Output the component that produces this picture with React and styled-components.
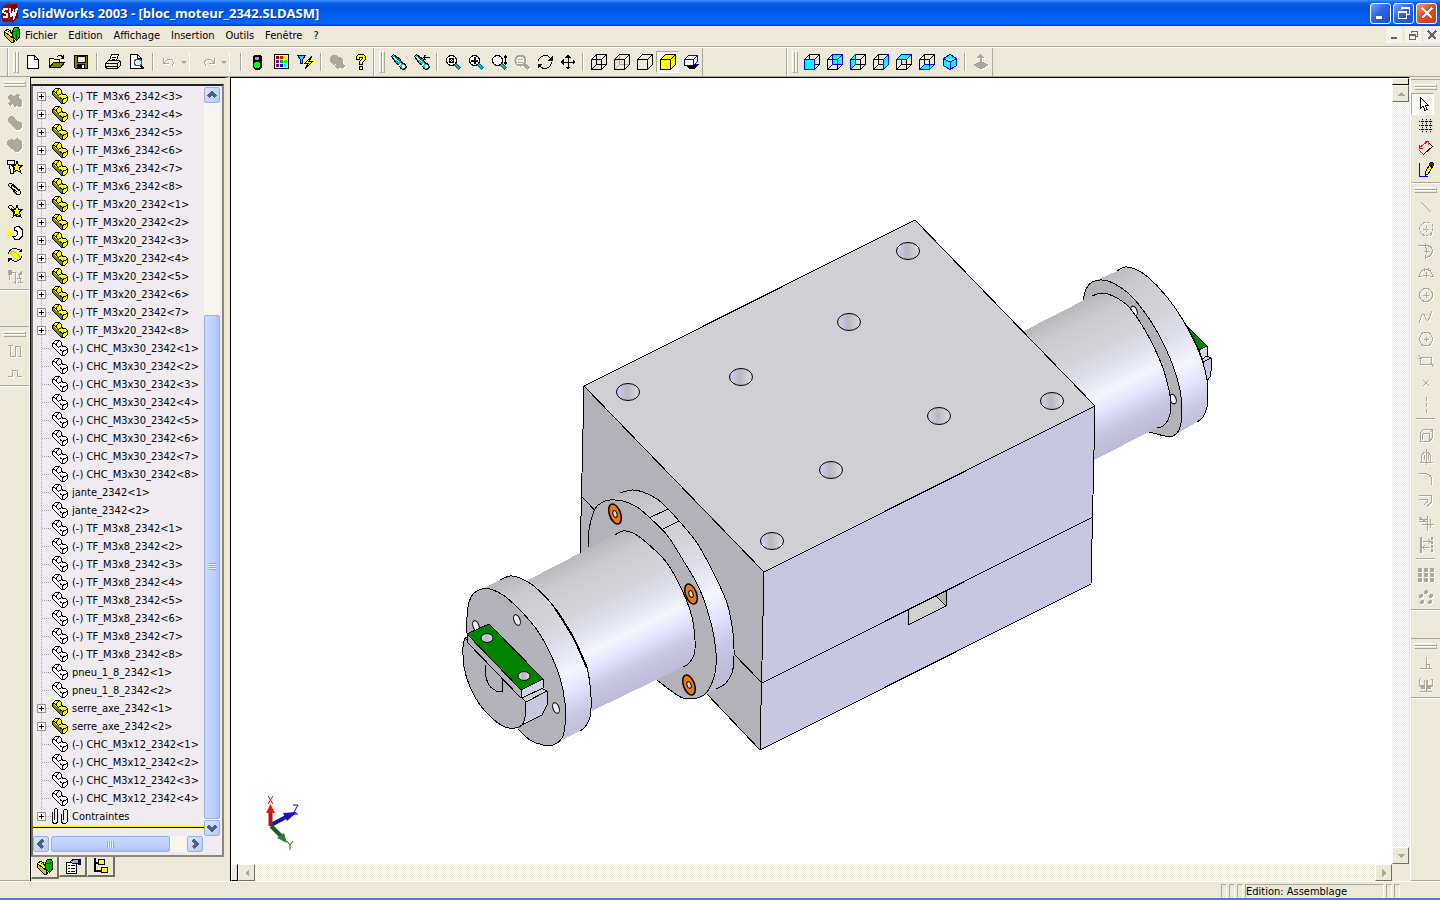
import React from 'react';
import styled, { createGlobalStyle } from 'styled-components';

const GlobalStyle = createGlobalStyle`
  * {
    box-sizing: border-box;
  }

  body {
    margin: 0;
    background: #ece9d8;
    font-family: "DejaVu Sans Condensed", "Noto Sans", sans-serif;
    font-size: 11px;
    color: #000;
  }

  button {
    padding: 0;
    border: none;
    background: none;
    font: inherit;
    color: inherit;
  }

  ul {
    margin: 0;
    padding: 0;
    list-style: none;
  }
`;

/* ---------- icons ---------- */

const part = (light, dark) => (
  <>
    <path d="M.5 3.5L3.5 .5H7.5L9.5 2.5V5.5L11.5 6.5H13.5L15.5 8.5V12.5L12.5 15.5H9.5L.5 6.5Z" fill={light} stroke="#000" />
    <path d="M1 3.5L4.5 6.5L10.5 11.5V15H9.5L1 6.5Z" fill={dark} />
    <path d="M.5 3.5H2.5L4.5 5.5V3.5L7.5 .5M4.5 5.5L6.5 7.5L9.5 5.5M8 9.5L10.5 11.5L15 9.5M10.5 11.5V15" fill="none" stroke="#000" />
  </>
);

const assembly = (
  <>
    <path d="M.5 4.500L4 2L12 11L10 15H7L.5 8Z" fill="#ff0" stroke="#000" />
    <path d="M1 5L9.500 11.500V15H7L1 8Z" fill="#cc0" />
    <path d="M1 5L9.500 11.500V15M4 4.500L7 3" fill="none" stroke="#000" />
    <path d="M8.500 3.500L10.500 .5H14.500L15.500 3V10L12.500 13.500L8.500 10Z" fill="#00c000" stroke="#000" />
    <path d="M8.500 4.500H12.500V13M12.500 4.500L15.500 3" fill="none" stroke="#060" />
  </>
);

const frame = 'M.5 5.5H10.5V15.5H.5ZM5.5 .5H15.5V10.5H5.5ZM.5 5.5L5.5 .5M10.5 5.5L15.5 .5M.5 15.5L5.5 10.5M10.5 15.5L15.5 10.5';
const outline = 'M.5 5.5L5.5 .5H15.5V10.5L10.5 15.5H.5ZM.5 5.5H10.5V15.5M10.5 5.5L15.5 .5';

const view = (face, over) => (
  <>
    <path d={frame} fill="none" stroke="#000" />
    <path d={face} fill="#0ff" stroke="#00f" />
    {over && <path d={over} fill="none" stroke="#000" />}
  </>
);

const lens = (inner) => (
  <>
    <path d="M10 10L15 15" stroke="#088" strokeWidth="3" />
    <path d="M10 10L14 14" stroke="#3cf" />
    <circle cx="6.5" cy="6.5" r="5" fill="#fff" stroke="#000" />
    {inner}
  </>
);

const torchBody = (
  <>
    <path d="M.5 2.5L2.5 .5L9.500 5.5L10.500 8.500L14.5 10.5L15.5 13L13 15.5L9.5 14.5L8.500 11L5.5 9.5Z" fill="#0cc" stroke="#000" />
    <path d="M2.5 3L8 8M10 9.500L8 11.500" stroke="#fff" />
    <path d="M4.500 3L10 8" stroke="#066" />
    <circle cx="12.5" cy="12.5" r="1.500" fill="#fff" />
  </>
);

const star = 'M10 2L11.500 6H16L12.500 9L14 14L10 11L6 14L7.500 9L4 6H8.500Z';

const icons = {
  assembly,
  part: part('#ff0', '#808000'),
  partLight: part('#fff', '#fff'),
  mates: (
    <path d="M.5 4V12.5Q.5 15.500 3 15.500Q5.500 15.500 5.500 12.500V3Q5.500 .5 4 .5Q2.500 .5 2.500 3V12M9.500 6V12.500Q9.500 15.500 12 15.500Q15.500 15.500 15.500 12.500V4Q15.500 1.500 13.500 1.500Q11.500 1.500 11.500 4V12" fill="none" stroke="#000" />
  ),
  fresh: <path d="M2.5 1.5H9.5L13.5 5.5V14.5H2.5ZM9.5 1.5V5.5H13.5" fill="#fff" stroke="#000" />,
  open: (
    <>
      <path d="M.5 13.5V4.5H4.5L5.5 5.5H10.5V8" fill="#ff9" stroke="#000" />
      <path d="M.5 13.5L4.5 8.5H15.5L11.5 13.5Z" fill="#808000" stroke="#000" />
      <path d="M8.5 2.5L10 1.5H12L14.5 4M14.5 1V4.5H11.5" fill="none" stroke="#000" />
    </>
  ),
  save: (
    <>
      <path d="M1.5 1.5H14.5V14.5H2.5L1.5 13.5Z" fill="#808000" stroke="#000" />
      <path d="M4 2H12V8H4Z" fill="#ece9d8" stroke="#000" />
      <path d="M4 10H12V15H4Z" fill="#000" />
      <path d="M9 11H11V14H9Z" fill="#fff" />
    </>
  ),
  print: (
    <>
      <path d="M4.5 6.5L6.5 .5H13.5L11.5 6.5" fill="#fff" stroke="#000" />
      <path d="M7 3.5H11M6.5 5.5H10" stroke="#000" />
      <path d="M.5 9.5L3.5 6.5H14.5L15.5 7.5V11.5L12.5 14.5H1.5L.5 12.5Z" fill="#ece9d8" stroke="#000" />
      <path d="M.5 9.5H12.5V14M12.5 9.5L15.5 7M1 12.5H12" fill="none" stroke="#000" />
      <path d="M8 11H10V12H8Z" fill="#ff0" />
    </>
  ),
  preview: (
    <>
      <path d="M1.5 .5H8.5L12.5 4.5V14.5H1.5ZM8.5 .5V4.5H12.5" fill="#fff" stroke="#000" />
      <path d="M11 11L15 15" stroke="#000" strokeWidth="2" />
      <circle cx="9" cy="8.5" r="3.5" fill="#cff" stroke="#555" />
    </>
  ),
  undo: <path d="M2.5 4V9.5H8M2.5 9.5L6 6Q9 4.500 11.500 6.500Q13.500 9.500 10.500 12.500" fill="none" stroke="currentColor" />,
  redo: <path d="M13.5 4V9.5H8M13.5 9.5L10 6Q7 4.500 4.500 6.500Q2.500 9.500 5.500 12.500" fill="none" stroke="currentColor" />,
  light: (
    <>
      <path d="M5.5 .5H10.5L12.5 2.5V13.5L10.5 15.5H5.5L3.5 13.5V2.5Z" fill="#000" />
      <circle cx="8" cy="4.5" r="2" fill="#a99" />
      <circle cx="8" cy="11" r="3" fill="#0f0" />
    </>
  ),
  palette: (
    <>
      <path d="M1.500 .5H15.500V14.500H1.500Z" fill="#fff" stroke="#000" />
      {['#800000', '#f00', '#ff0', '#808', '#0a0', '#0f0', '#808', '#00f', '#0ff'].map((c, i) => (
        <rect key={c + i} x={3 + (i % 3) * 4} y={2 + Math.floor(i / 3) * 4} width="3" height="3" fill={c} />
      ))}
    </>
  ),
  filter: (
    <>
      <path d="M.5 1.5H8.5L5.5 5.5V9.5H3.5V5.5Z" fill="#3cf" stroke="#008" />
      <path d="M14.5 2.5L8 9H11.5L8 14.5L15.5 7.5H12Z" fill="#ff0" stroke="#000" />
    </>
  ),
  blob: <path d="M1 3L3 1H7L9 3L12 3L14 6V9L16 12L14 15L11 14L9 15L6 13L7 10L4 11L1 8Z" fill="currentColor" />,
  help: (
    <path d="M3.5 5.5V2.5L5.500 .5H10.5L12.5 2.5V5.5L9.5 8.5V10.500H6.500V7.5L9.500 4.500V3.500H6.500V5.5ZM6.5 12.5H9.5V15.5H6.5Z" fill="#ff0" stroke="#000" />
  ),
  torch: torchBody,
  torchBack: (
    <>
      {torchBody}
      <path d="M9 3.5H16M11.5 1L9.5 3.5L11.5 6" fill="none" stroke="#000" />
    </>
  ),
  zoomFit: lens(<path d="M4.5 4.5H8.5V8.5H4.5ZM4.5 4.5L8.5 8.5M8.5 4.5L4.5 8.5" fill="none" stroke="#000" />),
  zoomIn: lens(<path d="M3 6.5H10M6.5 3V10" stroke="#000" strokeWidth="2" />),
  zoomDrag: lens(<path d="M14.5 2V10M13 3.5L14.5 1.5L16 3.5M13 8.5L14.5 10.5L16 8.5" fill="none" stroke="#000" />),
  zoomOff: (
    <>
      <path d="M10 10L15 15" stroke="currentColor" strokeWidth="3" />
      <circle cx="6.5" cy="6.5" r="5" fill="none" stroke="currentColor" strokeWidth="2" />
      <path d="M4 5.5H9M4 8.5H9" stroke="currentColor" />
    </>
  ),
  rotate: (
    <>
      <path d="M1.5 7.5Q2 2 8 1.5Q12 1.5 14 5M14.5 8.5Q14 14 8 14.5Q4 14.5 2 11" fill="none" stroke="#000" />
      <path d="M15.5 1.5V6.5H10.5ZM.5 14.5V9.5H5.5Z" fill="#000" />
    </>
  ),
  pan: (
    <>
      <path d="M8 1V15M1 8H15" stroke="#000" />
      <path d="M8 0L11 3.5H5ZM8 16L11 12.5H5ZM0 8L3.5 5V11ZM16 8L12.5 5V11Z" fill="#000" />
    </>
  ),
  wire: <path d={frame} fill="none" stroke="#000" />,
  hidden: (
    <>
      <path d="M5.5 .5V10.5H15.5M5.5 10.5L.5 15.5" fill="none" stroke="#aaa" />
      <path d={outline} fill="none" stroke="#000" />
    </>
  ),
  noHidden: <path d={outline} fill="none" stroke="#000" />,
  shaded: <path d={outline} fill="#ff0" stroke="#000" />,
  shadow: (
    <>
      <path d="M4 12H10L13 10H16L11 15H6Z" fill="#000" />
      <path d="M1.5 5.5L5.5 1.5H14.5V7.5L10.5 11.5H1.5ZM1.5 5.5H10.5V11.5M10.5 5.5L14.5 1.5" fill="#fff" stroke="#00f" />
    </>
  ),
  viewFront: view('M.5 5.5H10.5V15.5H.5Z'),
  viewBack: view('M5.5 .5H15.5V10.5H5.5Z', 'M.5 5.5H10.5V15.5H.5ZM10.5 5.5L15.5 .5'),
  viewLeft: view('M.5 5.5L5.5 .5V10.5L.5 15.5Z', 'M.5 5.5H10.5'),
  viewRight: view('M10.5 5.5L15.5 .5V10.5L10.5 15.5Z'),
  viewTop: view('M.5 5.5L5.5 .5H15.5L10.5 5.5Z'),
  viewBottom: view('M.5 15.5L5.5 10.5H15.5L10.5 15.5Z', 'M10.5 5V15'),
  viewIso: <path d="M1.5 4.5L8 .5L14.5 4.5V11.5L8 15.5L1.5 11.5ZM1.5 4.5L8 8L14.5 4.5M8 8V15.5" fill="#0ff" stroke="#00f" />,
  normal: <path d="M0 11L8 7L16 11L8 15.5ZM7.500 0L11 3.5H9V9H6.5V3.5H4.5Z" fill="currentColor" />,
  pointer: <path d="M5.5 1.5V12.5L8 10L10 14.5L12 13.5L10.5 9.5H13.5Z" fill="#fff" stroke="#000" />,
  grid: (
    <>
      <path d="M1 3.5H15M1 7.5H15M1 11.5H15M4.5 1V15M8.5 1V15M12.5 1V15" stroke="#bbb" />
      <path d="M1 3.5H15M1 7.5H15M1 11.5H15" stroke="#000" strokeDasharray="1 1" />
      <path d="M4.5 1V15M8.5 1V15M12.5 1V15" stroke="#000" strokeDasharray="1 1" />
    </>
  ),
  dimension: (
    <>
      <path d="M5.5 14.5L14.5 6.5L11.5 3.5" fill="none" stroke="#000" />
      <path d="M1.5 7.5L9.5 1.5M1.5 10.5L5.5 14.5M1.5 4.5V8.5H5M7 1.5H10.5V5" fill="none" stroke="#f00" />
    </>
  ),
  sketch: (
    <>
      <path d="M1.5 1V14.5H10" fill="none" stroke="#00f" />
      <path d="M7.5 13.5V10L12 2L15 4L10.5 11.5Z" fill="#ff0" stroke="#000" />
      <circle cx="13.5" cy="2.5" r="2" fill="#800000" stroke="#000" />
    </>
  ),
  line: <path d="M3 3L13 13" stroke="currentColor" />,
  centerArc: <path d="M8 1.5A6.5 6.5 0 1 0 14.5 8V2M8 5V11M5 8H11M12 14.5L15 11M9 1.5H13" fill="none" stroke="currentColor" strokeDasharray="3 1" />,
  tangentArc: <path d="M0 2.5H8Q14 3 14.5 8Q14 13 8 14.5M5.5 8H11.5M8.5 5V11M7 0V5M7 12V16" fill="none" stroke="currentColor" />,
  threeArc: <path d="M1.5 11Q2 4.5 8 4.5Q14 4.5 14.5 11M5 10H11M8 7V13M0 11.5H4M12 11.5H16M6 2.5V6M10 2.5V6" fill="none" stroke="currentColor" />,
  circle: <path d="M8 1.5A6.5 6.5 0 1 0 8 14.5A6.5 6.5 0 1 0 8 1.5M5 8H11M8 5V11" fill="none" stroke="currentColor" />,
  spline: <path d="M1.5 14Q3 4 6 5.5Q8 12 10 11Q12 9 13.5 2" fill="none" stroke="currentColor" />,
  polygon: <path d="M4.5 1.5H11.5L15 8L11.5 14.5H4.5L1 8ZM5.5 8H10.5M8 5.5V10.5" fill="none" stroke="currentColor" />,
  rect: <path d="M2.5 4.5H13.5V11.5H2.5ZM0 2L4 6M12 10L16 14M0 5H4M12 11H16" fill="none" stroke="currentColor" />,
  point: <path d="M5 5L11 11M11 5L5 11" stroke="currentColor" />,
  centerline: <path d="M8.5 0V16" stroke="currentColor" strokeDasharray="4 2" />,
  convert: <path d="M2.5 5.5L5.5 2.5H14.5V10.5L11.5 14.5H2.5ZM4.5 6.5H11.5V14M4.5 6.5V13M11.5 5.5L14.5 2.5" fill="none" stroke="currentColor" />,
  mirror: <path d="M8 0V16M1.5 13.5H14.5M3.5 13.5V8Q4 3.5 7 3.5M12.5 13.5V8Q12 3.5 9 3.5M6 6V11M10 6V11" fill="none" stroke="currentColor" />,
  fillet: <path d="M1 2.5H7Q13.5 3 13.5 9V14" fill="none" stroke="currentColor" />,
  offset: <path d="M1 2.5H13.5V9L9 13.5M1 6.5H9.5V9L6 12" fill="none" stroke="currentColor" />,
  trim: <path d="M1 2L7 6L1 6M1 4L9 4M9.5 1V16M4 9.5H16M12 4V13" fill="none" stroke="currentColor" />,
  extend: (
    <>
      <path d="M2.5 0V16" stroke="currentColor" strokeWidth="2" />
      <path d="M14 0V16" stroke="currentColor" strokeWidth="2" strokeDasharray="3 1" />
      <path d="M5 4.5H12M10 2L12.5 4.5L10 7M12 10.5H5M7 8L5 10.5L7 13" fill="none" stroke="currentColor" />
    </>
  ),
  linear: (
    <>
      {[0, 1, 2, 3, 4, 5, 6, 7, 8].map((i) => (
        <rect key={i} x={(i % 3) * 6} y={1 + Math.floor(i / 3) * 5} width="4" height="4" fill="currentColor" />
      ))}
    </>
  ),
  circular: (
    <>
      {[[8, 3], [3, 7], [13, 7], [4, 13], [12, 13]].map(([x, y]) => (
        <circle key={`${x}${y}`} cx={x} cy={y} r="2" fill="currentColor" />
      ))}
    </>
  ),
  perpendicular: <path d="M2 13.5H14M8.5 2V13M8.5 9.5H11.5V13" fill="none" stroke="currentColor" />,
  relations: (
    <>
      <path d="M1.500 2V9M1.500 1.500H3M6 3V10M9.5 3V10M14.5 3V10M13 2.500H15M2 14.5H14M8 3V15" stroke="currentColor" />
      <path d="M2 8H7V12H3ZM10 8H14L13 12H9Z" fill="currentColor" />
    </>
  ),
  insertPart: <path d="M1 3L3 1L7 3L10 1L13 2L12 5L15 7V12L13 14L9 13L8 15L6 11L3 13L1 11L3 8L1 6Z" fill="currentColor" />,
  hidePart: <path d="M1 3L4 1L8 2L9 5L13 7L15 9V13L12 15H9L1 7Z" fill="currentColor" />,
  editPart: <path d="M0 4L4 2L7 3L10 1L15 4V11L12 15H9L0 8Z" fill="currentColor" />,
  smartScrew: (
    <>
      <path d="M.5 1.5H7.5V5.5H.5ZM2.5 5.5H6.5V14.5H3.5Z" fill="#fff" stroke="#000" />
      <path d={star} fill="#ff0" stroke="#000" strokeWidth="1" />
    </>
  ),
  mate: <path d="M12.5 9L4.5 2.5Q2 1.5 1.5 4.5L10 13.5Q13.5 15 14 11L5.5 4.500Q3.500 4.500 4.500 6.500L10.5 11.5" fill="none" stroke="#000" />,
  smartMate: (
    <>
      <path d="M8 6L4.5 2.5Q2 1.5 1.5 4.5L10 13.5Q13.5 15 13 12M4 5L10.5 11.5" fill="none" stroke="#000" />
      <path d={star} fill="#ff0" stroke="#000" strokeWidth="1" />
    </>
  ),
  move: (
    <>
      <path d="M7 3.5L9.5 1.5H12L15.5 5V11L12 14.5H8L6 11.5Q11 12 10.5 8Q10 5 7 5Z" fill="#fff" stroke="#000" />
      <path d="M0 3H2V7H6V10H2V13H0Z" fill="#ff0" />
    </>
  ),
  rotatePart: (
    <>
      <path d="M1.5 7Q2 2 8 1.5L13 3M14.5 9Q14 14 8 14.5L3 12" fill="none" stroke="#000" />
      <path d="M3 6L6 4L13 9L12 12H9Z" fill="#ff0" stroke="#cc0" />
      <path d="M15 1V5H11ZM1 15V11H5Z" fill="#000" />
    </>
  ),
  explode: (
    <>
      <path d="M1 1H5V6H1ZM10 6L15 1V6Z" fill="currentColor" />
      <path d="M2.500 6V10.500M2.500 3.500H8.500V14.500M5.500 13.500H8.500M12.500 5V10M10 9.500H15M10.500 13.5H16M13 10V14" fill="none" stroke="currentColor" />
    </>
  ),
  route: <path d="M3.5 3V13.5H8.5V3.5H13.5V14M1 2.5H6M11 13.5H15" fill="none" stroke="currentColor" />,
  step: <path d="M1 11.5H5.5V5.5H10.5V11.5H15" fill="none" stroke="currentColor" />,
  properties: (
    <>
      <path d="M1.5 4.5H11.5V15.5H1.5Z" fill="#fff" stroke="#000" />
      <path d="M3 7.5H5M3 10.5H5M3 13.5H5M6 7.5H10M6 10.5H10M6 13.5H10" stroke="#000" />
      <path d="M5.5 3.5L8 1.5H13V6L10 5H7Z" fill="#aaa" stroke="#000" />
      <path d="M13 1H16V7H13Z" fill="#008" />
    </>
  ),
  config: (
    <>
      <path d="M1.5 0V12.5H8M1.5 4.5H6" fill="none" stroke="#000" strokeWidth="2" />
      <path d="M5.5 1.5H11.5V6.5H5.5ZM8.5 9.5H14.5V14.5H8.5Z" fill="#ff0" stroke="#000" />
    </>
  ),
};

const Svg = styled.svg`
  display: block;
  flex: none;
  width: 16px;
  height: 16px;
  overflow: visible;
  shape-rendering: crispEdges;
`;

const Icon = ({ name }) => (
  <Svg viewBox="0 0 16 16" aria-hidden="true">{icons[name]}</Svg>
);

/* ---------- window frame ---------- */

const Window = styled.div`
  display: flex;
  flex-direction: column;
  height: 100vh;
  overflow: hidden;
  border-bottom: 2px solid #3a80dc;
`;

const TitleBar = styled.header`
  display: flex;
  align-items: center;
  flex: none;
  height: 26px;
  padding: 0 3px 0 1px;
  background: linear-gradient(#3a93ff 0, #0a5ee8 3px, #0053e0 8px, #0062fc 18px, #0066ff 23px, #0040c8 26px);
`;

const Title = styled.h1`
  flex: 1;
  margin: 0 0 0 4px;
  font: bold 13px "Open Sans", "DejaVu Sans Condensed", sans-serif;
  color: #fff;
  text-shadow: 1px 1px #003399;
`;

const Logo = styled(Svg)`
  width: 17px;
  height: 20px;
`;

const WindowButtons = styled.div`
  display: flex;
  gap: 2px;
`;

const WindowButton = styled.button`
  display: flex;
  align-items: center;
  justify-content: center;
  width: 21px;
  height: 21px;
  border: 1px solid #fff;
  border-radius: 3px;
  color: #fff;
  background: ${(p) => (p.$close
    ? 'linear-gradient(135deg, #f0a080, #e0502c 45%, #c83818)'
    : 'linear-gradient(135deg, #7ca8f8, #2c64e8 45%, #1c50d0)')};
`;

const MenuBar = styled.nav`
  display: flex;
  align-items: center;
  flex: none;
  height: 21px;
  padding: 0 0 2px 4px;
  border-bottom: 1px solid #aca899;
`;

const Menus = styled.ul`
  display: flex;
  flex: 1;
  gap: 11px;
  margin-left: 5px;
`;

const MdiButton = styled.button`
  display: flex;
  align-items: center;
  justify-content: center;
  width: 16px;
  height: 16px;
  margin-left: 3px;
  background: #f4f3ec;
  color: #666;
`;

/* ---------- tool bars ---------- */

const Toolbars = styled.div`
  display: flex;
  flex: none;
  height: 30px;
  padding-left: 7px;
  border-top: 1px solid #fff;
  border-bottom: 1px solid #aca899;
`;

const Band = styled.div`
  display: flex;
  align-items: center;
  padding-left: 5px;
  border-left: 1px solid #aca899;
  box-shadow: inset 1px 0 #fff;
  ${(p) => p.$end && 'border-right: 1px solid #aca899;'}
`;

const BandGap = styled.div`
  width: 83px;
`;

const Grip = styled.span`
  display: flex;
  flex: none;
  flex-direction: ${(p) => (p.$across ? 'column' : 'row')};
  width: ${(p) => (p.$across ? '23px' : '6px')};
  height: ${(p) => (p.$across ? '6px' : '22px')};
  margin: ${(p) => (p.$across ? '4px 0 3px 3px' : '0 2px 0 0')};

  &::before, &::after {
    content: "";
    flex: 1;
    border: 1px solid;
    border-color: #fff #aca899 #aca899 #fff;
  }
`;

const Tool = styled.button`
  display: flex;
  align-items: center;
  justify-content: center;
  flex: none;
  width: ${(p) => p.$width || 23}px;
  height: 22px;
  color: #aca899;
  ${(p) => p.disabled && 'filter: drop-shadow(1px 1px 0 #fff);'}
  ${(p) => p.$pressed && `
    width: 23px;
    border: 1px solid;
    border-color: #aca899 #fff #fff #aca899;
    background: #f8f7f0;
  `}
`;

const Rule = styled.span`
  flex: none;
  width: 2px;
  height: 18px;
  margin: 0 3px;
  border-left: 1px solid #aca899;
  border-right: 1px solid #fff;
`;

const DropArrow = styled.span`
  flex: none;
  width: 9px;
  height: 18px;
  margin-right: 7px;
  border-right: 1px solid #fff;

  &::before {
    content: "";
    display: block;
    width: 0;
    margin-top: 8px;
    border: solid transparent;
    border-width: 3px 3px 0;
    border-top-color: #aca899;
  }
`;

const files = ['fresh', 'open', 'save', '|', 'print', 'preview', '|', 'undo', 'v', 'redo', 'v', '|', 'light', 'palette', 'filter', '|', 'blob', 'help'];
const display = ['torch', 'torchBack', '|', 'zoomFit', 'zoomIn', 'zoomDrag', 'zoomOff', 'rotate', 'pan', '|', 'wire', 'hidden', 'noHidden', 'shaded', 'shadow'];
const views = ['viewFront', 'viewBack', 'viewLeft', 'viewRight', 'viewTop', 'viewBottom', 'viewIso', '|', 'normal'];
const inactive = ['undo', 'redo', 'blob', 'zoomOff', 'normal'];

const Tools = ({ names, width, off = inactive, pressed }) => names.map((name, i) => {
  if (name === '|') return <Rule key={i} />;
  if (name === 'v') return <DropArrow key={i} />;
  return (
    <Tool key={i} aria-label={name} $width={width} $pressed={name === pressed} disabled={off.includes(name)}>
      <Icon name={name} />
    </Tool>
  );
});

/* ---------- side docks ---------- */

const Body = styled.div`
  display: flex;
  flex: 1;
  min-height: 0;
`;

const Dock = styled.aside`
  display: flex;
  flex-direction: column;
  flex: none;
  width: 30px;
  border-${(p) => (p.$right ? 'left' : 'right')}: 1px solid #fff;
  border-bottom: 1px solid #aca899;
  ${(p) => p.$right && 'padding-top: 2px;'}
`;

const DockGroup = styled.div`
  display: flex;
  flex-direction: column;
  margin-top: ${(p) => p.$gap || 0}px;
  padding-bottom: 1px;
  border-bottom: 1px solid #aca899;
  box-shadow: 0 1px #fff;
  ${(p) => p.$top && 'border-top: 1px solid #aca899;'}
`;

const DockRule = styled.span`
  height: 2px;
  margin: 2px 5px 4px;
  border-top: 1px solid #aca899;
  border-bottom: 1px solid #fff;
`;

const assemblyTools = ['insertPart', 'hidePart', 'editPart', 'smartScrew', 'mate', 'smartMate', 'move', 'rotatePart', 'explode'];
const sketchTools = ['line', 'centerArc', 'tangentArc', 'threeArc', 'circle', 'spline', 'polygon', 'rect', 'point', 'centerline'];
const editTools = ['convert', 'mirror', 'fillet', 'offset', 'trim', 'extend'];
const patternTools = ['linear', 'circular'];
const relationTools = ['perpendicular', 'relations'];

/* ---------- feature tree ---------- */

const Manager = styled.section`
  display: flex;
  flex-direction: column;
  flex: none;
  width: 200px;
  border-right: 6px solid #ece9d8;
  border-top: 1px solid #000;
  border-left: 1px solid #000;
`;

const TreeFrame = styled.div`
  display: flex;
  flex: 1;
  flex-direction: column;
  min-height: 0;
  margin-top: 6px;
  border: 2px solid;
  border-color: #222 #8a8776 #8a8776 #716f64;
  background: #f0ebf0;
`;

const TreeRow = styled.div`
  display: flex;
  flex: 1;
  min-height: 0;
`;

const Tree = styled.div`
  flex: 1;
  min-width: 0;
  overflow: hidden;
  padding-top: 1px;
`;

const Items = styled.ul`
  border-bottom: 2px solid #ff0;
  box-shadow: 0 1px #000;
`;

const Item = styled.li`
  display: flex;
  align-items: center;
  height: 18px;
  padding-left: 4px;
  white-space: nowrap;
  background: repeating-linear-gradient(#aaa 0 1px, transparent 1px 2px) 8px 0 / 1px ${(p) => (p.$last ? '9px' : '100%')} no-repeat;

  svg {
    margin: 0 4px 0 1px;
  }
`;

const Expander = styled.button`
  flex: none;
  width: 9px;
  height: 9px;
  border: 1px solid #989584;
  background:
    linear-gradient(#000, #000) center / 5px 1px no-repeat,
    linear-gradient(#000, #000) center / 1px 5px no-repeat,
    #f8f6f8;
`;

const Stub = styled.span`
  flex: none;
  width: ${(p) => (p.$long ? '9px' : '5px')};
  margin-left: ${(p) => (p.$long ? '5px' : '0')};
  height: 1px;
  background: repeating-linear-gradient(90deg, #aaa 0 1px, transparent 1px 2px);
`;

const range = (label, from, to, icon) => (
  Array.from({ length: to - from + 1 }, (_, i) => ({ label: `${label}<${from + i}>`, icon }))
);

const items = [
  ...range('(-) TF_M3x6_2342', 3, 8, 'part'),
  ...range('(-) TF_M3x20_2342', 1, 8, 'part'),
  ...range('(-) CHC_M3x30_2342', 1, 8, 'partLight'),
  ...range('jante_2342', 1, 2, 'partLight'),
  ...range('(-) TF_M3x8_2342', 1, 8, 'partLight'),
  ...range('pneu_1_8_2342', 1, 2, 'partLight'),
  ...range('serre_axe_2342', 1, 2, 'part'),
  ...range('(-) CHC_M3x12_2342', 1, 4, 'partLight'),
  { label: 'Contraintes', icon: 'mates' },
];

const XpScroll = styled.div`
  display: flex;
  flex: none;
  flex-direction: ${(p) => (p.$across ? 'row' : 'column')};
  width: ${(p) => (p.$across ? '170px' : '16px')};
  ${(p) => (p.$across ? 'height: 16px;' : 'margin: 1px 2px 0 0;')}
  background: #f6f5f0;
`;

const XpButton = styled.button`
  display: flex;
  align-items: center;
  justify-content: center;
  flex: none;
  width: 16px;
  height: 16px;
  border: 1px solid #98b0e0;
  border-radius: 2px;
  background: linear-gradient(135deg, #dce8ff, #b4c8f8);
`;

const Thumb = styled.div`
  display: flex;
  align-items: center;
  justify-content: center;
  flex: ${(p) => p.$size};
  margin: ${(p) => (p.$across ? '0 2px' : '1px 0')};
  border: 1px solid #98b0e0;
  border-radius: 2px;
  background: linear-gradient(${(p) => (p.$across ? '180deg' : '90deg')}, #c8d8ff, #bccffc 70%, #a8c0f0);

  &::before {
    content: "";
    width: 7px;
    height: 7px;
    background: repeating-linear-gradient(${(p) => (p.$across ? '90deg' : '180deg')}, #8ca8e0 0 1px, #e8f0ff 1px 2px);
  }
`;

const Space = styled.div`
  flex: ${(p) => p.$size};
`;

const TreeFoot = styled.div`
  flex: none;
  height: 19px;
`;

const Tabs = styled.div`
  display: flex;
  flex: none;
  height: 24px;
`;

const Tab = styled.button`
  display: flex;
  align-items: center;
  justify-content: center;
  width: 28px;
  height: ${(p) => (p.$active ? '22px' : '20px')};
  border: 1px solid;
  border-width: 0 2px 2px 1px;
  border-color: #fff #716f64 #716f64 #fff;
  background: #ece9d8;
`;

const Chevron = ({ turn }) => (
  <Svg viewBox="0 0 16 16" aria-hidden="true" style={{ rotate: `${turn}deg` }}>
    <path d="M4 10L8 6L12 10" fill="none" stroke="#4d6185" strokeWidth="3" />
  </Svg>
);

const FeatureTree = () => (
  <Manager>
    <TreeFrame>
      <TreeRow>
        <Tree>
          <Items>
            {items.map(({ label, icon }) => (
              <Item key={label} $last={icon === 'mates'}>
                {icon === 'partLight' ? <Stub $long /> : (
                  <>
                    <Expander aria-label={`Ouvrir ${label}`} />
                    <Stub />
                  </>
                )}
                <Icon name={icon} />
                {label}
              </Item>
            ))}
          </Items>
        </Tree>
        <XpScroll>
          <XpButton aria-label="Haut"><Chevron turn={0} /></XpButton>
          <Space $size={211} />
          <Thumb $size={503} />
          <XpButton aria-label="Bas"><Chevron turn={180} /></XpButton>
        </XpScroll>
      </TreeRow>
      <TreeFoot>
        <XpScroll $across>
          <XpButton aria-label="Gauche"><Chevron turn={-90} /></XpButton>
          <Thumb $across $size={120} />
          <Space $size={15} />
          <XpButton aria-label="Droite"><Chevron turn={90} /></XpButton>
        </XpScroll>
      </TreeFoot>
    </TreeFrame>
    <Tabs>
      <Tab $active aria-label="Arbre de création"><Icon name="assembly" /></Tab>
      <Tab aria-label="Propriétés"><Icon name="properties" /></Tab>
      <Tab aria-label="Configurations"><Icon name="config" /></Tab>
    </Tabs>
  </Manager>
);

/* ---------- 3D view ---------- */

const Viewport = styled.main`
  display: grid;
  grid-template: minmax(0, 1fr) 17px / minmax(0, 1fr) 17px;
  flex: 1;
  min-width: 0;
  border-top: 1px solid #000;
  border-left: 1px solid #000;
  border-right: 1px solid #ece9d8;
`;

const Canvas = styled.svg`
  display: block;
  width: 100%;
  height: 100%;
  background: #fff;
`;

const ClassicScroll = styled.div`
  display: flex;
  justify-content: space-between;
  flex-direction: ${(p) => (p.$across ? 'row' : 'column')};
  background: repeating-conic-gradient(#ece9d8 0 25%, #fff 0 50%) 0 0 / 2px 2px;
`;

const ScrollEnd = styled.div`
  display: flex;
  flex-direction: inherit;
`;

const Splitter = styled.span`
  flex: none;
  flex-basis: 7px;
  border: 1px solid;
  border-color: #fff #000 #000 #fff;
  background: #ece9d8;
`;

const ClassicButton = styled.button`
  display: flex;
  align-items: center;
  justify-content: center;
  width: 17px;
  height: 17px;
  border: 1px solid;
  border-color: #fff #716f64 #716f64 #fff;
  background: #ece9d8;
`;

const Arrow = ({ turn }) => (
  <Svg viewBox="0 0 16 16" aria-hidden="true" style={{ rotate: `${turn}deg` }}>
    <path d="M4 10L8 6L12 10Z" fill="#aca899" />
  </Svg>
);

// Catmull-Rom curve through every point
const curve = (points) => {
  let d = `M${points[0]}`;
  for (let i = 0; i < points.length - 1; i++) {
    const a = points[i - 1] || points[i];
    const b = points[i];
    const c = points[i + 1];
    const e = points[i + 2] || c;
    d += `C${b[0] + (c[0] - a[0]) / 6},${b[1] + (c[1] - a[1]) / 6} ${c[0] - (e[0] - b[0]) / 6},${c[1] - (e[1] - b[1]) / 6} ${c}`;
  }
  return d;
};

const flangeFace = [[589, 547], [589, 530], [595, 509], [603, 502], [610, 500], [623, 501], [637, 507], [650, 518], [667, 535], [683, 560], [700, 590], [712, 627], [716, 653], [715, 673], [707, 692], [697, 698], [683, 698], [670, 690], [657, 680]];
const flangeRim = [[620, 493], [632, 490], [643, 492], [657, 499], [668, 509], [680, 522], [697, 543], [713, 572], [727, 603], [733, 633], [734, 657], [732, 673], [725, 684], [716, 689]];
const shaftEnd = [[615, 535], [623, 531], [633, 533], [647, 543], [667, 563], [682, 590], [692, 617], [695, 640], [694, 655], [688, 664], [683, 667]];
const wheelFace = [[467, 633], [467, 617], [469, 602], [474, 593], [482, 589], [490, 589], [503, 595], [520, 610], [537, 630], [550, 653], [560, 678], [565, 703], [565, 725], [562, 738], [553, 745], [543, 745], [530, 740], [518, 729]];
const wheelRim = [[500, 580], [510, 576], [520, 578], [535, 587], [555, 608], [573, 637], [587, 668], [591, 697], [590, 717], [585, 727], [580, 731]];
const cap = [[465, 638], [463, 647], [464, 667], [470, 687], [480, 705], [493, 719], [505, 727], [515, 728], [522, 725], [525, 717], [526, 702]];
const farFace = [[1083, 301], [1086, 289], [1092, 282], [1102, 280], [1113, 283], [1128, 293], [1143, 310], [1158, 333], [1172, 363], [1180, 390], [1182, 413], [1179, 430], [1173, 436], [1165, 436], [1149, 432]];
const farRim = [[1117, 271], [1125, 267], [1135, 269], [1148, 277], [1167, 297], [1183, 320], [1197, 347], [1205, 370], [1208, 390], [1207, 407], [1203, 417], [1197, 422]];
const farShaft = [[1092, 296], [1102, 293], [1113, 296], [1127, 305], [1140, 322], [1153, 345], [1163, 368], [1169, 390], [1171, 407], [1168, 420], [1163, 426], [1157, 428]];

const holes = [[908, 251], [849, 322], [741, 377], [628, 392], [1052, 401], [939, 416], [831, 470], [772, 541]];
const screws = [[615, 514], [691, 594], [689, 685]];
const pins = [[517, 620], [476, 626], [556, 708]];
const farPins = [[1134, 311], [1173, 399]];

const steel = (
  <>
    <stop offset="0" stopColor="#b8b8be" />
    <stop offset=".12" stopColor="#cacace" />
    <stop offset=".35" stopColor="#d4d4da" />
    <stop offset=".5" stopColor="#e2e2f0" />
    <stop offset=".63" stopColor="#f5f5ff" />
    <stop offset=".74" stopColor="#e4e3ff" />
    <stop offset=".86" stopColor="#c8c7e4" />
    <stop offset="1" stopColor="#bdbbd6" />
  </>
);

const Bore = styled.ellipse`
  fill: ${(p) => p.$fill || 'url(#bore)'};
  shape-rendering: geometricPrecision;
`;

const Model = () => (
  <Canvas viewBox="231 78 1161 786" role="img" aria-label="bloc_moteur_2342">
    <defs>
      <linearGradient id="shaft" gradientUnits="userSpaceOnUse" x1="570" y1="558" x2="636" y2="690">{steel}</linearGradient>
      <linearGradient id="farShaft" gradientUnits="userSpaceOnUse" x1="1060" y1="313" x2="1125" y2="443">{steel}</linearGradient>
      <linearGradient id="flange" gradientUnits="userSpaceOnUse" x1="632" y1="485" x2="727" y2="675">{steel}</linearGradient>
      <linearGradient id="wheel" gradientUnits="userSpaceOnUse" x1="504" y1="578" x2="584" y2="738">{steel}</linearGradient>
      <linearGradient id="farWheel" gradientUnits="userSpaceOnUse" x1="1110" y1="269" x2="1194" y2="437">{steel}</linearGradient>
      <linearGradient id="bore">
        <stop offset="0" stopColor="#d0cff8" />
        <stop offset=".45" stopColor="#b8b8c0" />
        <stop offset="1" stopColor="#dcdce0" />
      </linearGradient>
    </defs>

    <g shapeRendering="crispEdges" stroke="#000" strokeLinejoin="round">
      <path d="M1187 326L1207 346L1199 350Z" fill="#008400" />
      <path d="M1199 350L1207 346V356L1202 359Z" fill="#d8d8e8" />
      <path d="M1202 359L1207 356L1211 358L1203 362Z" fill="#cfcfd4" />
      <path d="M1203 362L1211 358V371L1210 377L1207 381Z" fill="#c8c7e2" />
      <path d={`M1090 283${curve(farRim).replace('M', 'L')}L1173 436Z`} fill="url(#farWheel)" stroke="none" />
      <path d={curve(farRim)} fill="none" />
      <path d={curve(farFace)} fill="#b3b2b8" />
      {farPins.map(([x, y]) => (
        <Bore key={x} $fill="#f4f4fc" cx={x} cy={y} rx="3" ry="5" transform={`rotate(-20 ${x} ${y})`} />
      ))}
      <path d={`M1020 333${curve(farShaft).replace('M', 'L')}L1090 462L1020 400Z`} fill="url(#farShaft)" stroke="none" />
      <path d={curve(farShaft)} fill="none" />

      <path d="M584 386L915 220L1095 406L764 572Z" fill="#cfcfd4" />
      <path d="M584 386L764 572L760 750L580 560Z" fill="#b3b2b8" />
      <path d="M764 572L1095 406L1091 584L760 750Z" fill="#c8c7e2" />
      <path d="M582 497L762 683L1093 517" fill="none" />
      <path d="M908 610L946 591V606L908 625Z" fill="#cfcfd4" />
      <path d="M936 596L946 591V606Z" fill="#b3b2b8" />
      {holes.map(([x, y]) => (
        <Bore key={x} cx={x} cy={y} rx="11.5" ry="8.5" />
      ))}

      <path d={`M603 502${curve(flangeRim).replace('M', 'L')}L700 698Z`} fill="url(#flange)" stroke="none" />
      <path d={curve(flangeRim)} fill="none" />
      <path d="M649 518L668 509M661 530L679 521" />
      <path d={curve(flangeFace)} fill="#b3b2b8" />
      {screws.map(([x, y]) => (
        <g key={x} transform={`rotate(-20 ${x} ${y})`}>
          <Bore $fill="#f07800" cx={x} cy={y} rx="5.5" ry="10.5" strokeWidth="1.5" />
          <Bore $fill="#ddd" cx={x} cy={y} rx="2" ry="3.5" />
        </g>
      ))}

      <path d={`M526 581${curve(shaftEnd).replace('M', 'L')}L592 711Z`} fill="url(#shaft)" stroke="none" />
      <path d={curve(shaftEnd)} fill="none" />

      <path d={`M482 589${curve(wheelRim).replace('M', 'L')}L553 745Z`} fill="url(#wheel)" stroke="none" />
      <path d={curve(wheelRim)} fill="none" />
      <path d={curve(wheelRim.slice(4, 7))} fill="none" strokeWidth="2" />
      <path d={curve(wheelFace)} fill="#b3b2b8" />
      {pins.map(([x, y]) => (
        <Bore key={x} $fill="#ececf6" cx={x} cy={y} rx="3" ry="5.5" transform={`rotate(-20 ${x} ${y})`} />
      ))}

      <path d="M526 702L547 691V705L542 715L522 725Z" fill="#c8c7e2" />
      <path d={curve(cap)} fill="#b3b2b8" />
      <path d="M465 638L467 637L522 692V698L526 702Z" fill="#c4c4ca" />
      <path d="M522 698L541 688L547 691L526 702Z" fill="#cfcfd4" />
      <path d="M467 634L521 690V698L467 642Z" fill="#b3b2b8" />
      <path d="M521 690L543 679V688L522 698Z" fill="#d4d3ee" />
      <path d="M467 634L489 624L543 679L521 690Z" fill="#008400" />
      <Bore cx="487" cy="638" rx="6" ry="4.5" />
      <Bore cx="524" cy="676" rx="6" ry="4.5" />
      <path d="M485 665Q485 684 493 689Q498 693 503 691L502 680" fill="none" />
    </g>

    <g fill="none" strokeWidth="4">
      <path d="M271 825L286 817" stroke="#1414b4" />
      <path d="M297 812L283 813L287 821Z" fill="#1414b4" />
      <path d="M270.5 826V812" stroke="#b41414" />
      <path d="M270.5 804L266 813H275Z" fill="#e01818" />
      <path d="M271 826L281 836" stroke="#146414" />
      <path d="M287 843L277 838L284 833Z" fill="#288028" />
      <path d="M268 796L273 804M273 796L268 804" stroke="#f00" strokeWidth="1" />
      <path d="M293 805H298L293 814H298" stroke="#00f" strokeWidth="1" />
      <path d="M287 841L290 845L293 841M290 845V850" stroke="#080" strokeWidth="1" />
    </g>
  </Canvas>
);

/* ---------- status bar ---------- */

const StatusBar = styled.footer`
  display: flex;
  justify-content: flex-end;
  flex: none;
  gap: 2px;
  height: 17px;
  padding: 2px 40px 0 0;
  border-top: 1px solid #fff;
`;

const Cell = styled.span`
  width: ${(p) => (p.$wide ? '139px' : '6px')};
  border: 1px solid;
  border-color: #aca899 #fff transparent #aca899;
  line-height: 14px;
  white-space: nowrap;
`;

export default function App() {
  return (
    <>
      <GlobalStyle />
      <Window>
        <TitleBar>
          <Logo viewBox="0 0 17 20" aria-hidden="true">
            <path d="M1 4L6 1H16L17 15L12 19H2L0 14Z" fill="#a00808" />
            <path d="M9 3L16 1L17 15L11 19Z" fill="#700" />
            <path d="M7 6H3L2 9L6 11V14H2M9 5L10 14L12 9L13 14L16 5" fill="none" stroke="#fff" strokeWidth="2" />
          </Logo>
          <Title>SolidWorks 2003 - [bloc_moteur_2342.SLDASM]</Title>
          <WindowButtons>
            <WindowButton aria-label="Réduire">
              <Svg viewBox="0 0 16 16"><path d="M3 11H9V14H3Z" fill="#fff" /></Svg>
            </WindowButton>
            <WindowButton aria-label="Restaurer">
              <Svg viewBox="0 0 16 16">
                <path d="M5.5 5V2.5H13.5V9.5H11M5 3H14M2.5 6.5H10.5V13.5H2.5ZM2 7H11" fill="none" stroke="currentColor" strokeWidth="1.5" />
              </Svg>
            </WindowButton>
            <WindowButton $close aria-label="Fermer">
              <Svg viewBox="0 0 16 16"><path d="M3 3L13 13M13 3L3 13" stroke="#fff" strokeWidth="2" /></Svg>
            </WindowButton>
          </WindowButtons>
        </TitleBar>

        <MenuBar>
          <Icon name="assembly" />
          <Menus>
            {['Fichier', 'Edition', 'Affichage', 'Insertion', 'Outils', 'Fenêtre', '?'].map((m) => (
              <li key={m}><button>{m}</button></li>
            ))}
          </Menus>
          <MdiButton aria-label="Réduire le document">
            <Svg viewBox="0 0 16 16"><path d="M5 10H11V12H5Z" fill="currentColor" /></Svg>
          </MdiButton>
          <MdiButton aria-label="Restaurer le document">
            <Svg viewBox="0 0 16 16">
              <path d="M6 6V4H12V9H10M6 4.5H12M4 7H10V12H4ZM4 8H10" fill="none" stroke="currentColor" />
            </Svg>
          </MdiButton>
          <MdiButton aria-label="Fermer le document">
            <Svg viewBox="0 0 16 16"><path d="M4 4L12 12M12 4L4 12" stroke="currentColor" strokeWidth="2" /></Svg>
          </MdiButton>
        </MenuBar>

        <Toolbars>
          <Band>
            <Grip />
            <Tools names={files} width={24} />
          </Band>
          <Band $end>
            <Grip />
            <Tools names={display} pressed="shaded" />
          </Band>
          <BandGap />
          <Band $end>
            <Grip />
            <Tools names={views} />
          </Band>
        </Toolbars>

        <Body>
          <Dock>
            <DockGroup>
              <Grip $across />
              <Tools names={assemblyTools} width={29} off={['insertPart', 'hidePart', 'editPart', 'explode']} />
            </DockGroup>
            <DockGroup $top $gap={36}>
              <Grip $across />
              <Tools names={['route', 'step']} width={29} off={['route', 'step']} />
            </DockGroup>
          </Dock>

          <FeatureTree />

          <Viewport>
            <Model />
            <ClassicScroll>
              <ScrollEnd>
                <Splitter />
                <ClassicButton aria-label="Défiler vers le haut"><Arrow turn={0} /></ClassicButton>
              </ScrollEnd>
              <ClassicButton aria-label="Défiler vers le bas"><Arrow turn={180} /></ClassicButton>
            </ClassicScroll>
            <ClassicScroll $across>
              <ScrollEnd>
                <Splitter />
                <ClassicButton aria-label="Défiler à gauche"><Arrow turn={-90} /></ClassicButton>
              </ScrollEnd>
              <ClassicButton aria-label="Défiler à droite"><Arrow turn={90} /></ClassicButton>
            </ClassicScroll>
          </Viewport>

          <Dock $right>
            <DockGroup $top>
              <Grip $across />
              <Tools names={['pointer', 'grid', 'dimension', 'sketch']} width={29} pressed="pointer" />
            </DockGroup>
            <DockGroup>
              <Grip $across />
              <Tools names={sketchTools} width={29} off={sketchTools} />
              <DockRule />
              <Tools names={editTools} width={29} off={editTools} />
              <DockRule />
              <Tools names={patternTools} width={29} off={patternTools} />
            </DockGroup>
            <DockGroup $top $gap={28}>
              <Grip $across />
              <Tools names={relationTools} width={29} off={relationTools} />
            </DockGroup>
          </Dock>
        </Body>

        <StatusBar>
          <Cell />
          <Cell />
          <Cell />
          <Cell $wide>Edition: Assemblage</Cell>
          <Cell />
          <Cell />
        </StatusBar>
      </Window>
    </>
  );
}
